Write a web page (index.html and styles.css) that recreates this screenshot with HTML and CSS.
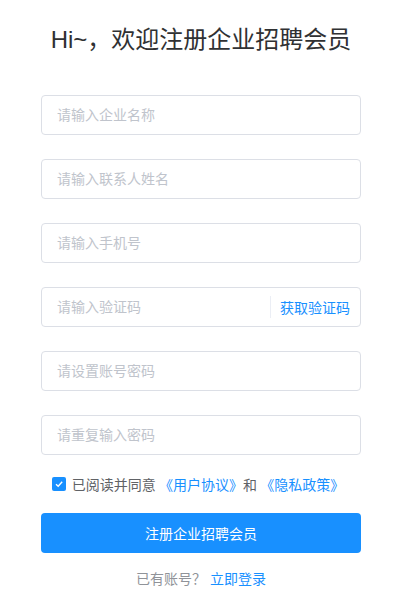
FILE: index.html
```html
<!DOCTYPE html>
<html lang="zh-CN">
<head>
  <meta charset="UTF-8">
  <meta name="viewport" content="width=device-width, initial-scale=1.0">
  <title>注册企业招聘会员</title>
  <link rel="stylesheet" href="styles.css">
</head>
<body>
  <div class="container">
    <h1 class="title">Hi~，欢迎注册企业招聘会员</h1>
    <form class="form">
      <div class="field"><input type="text" placeholder="请输入企业名称"></div>
      <div class="field"><input type="text" placeholder="请输入联系人姓名"></div>
      <div class="field"><input type="text" placeholder="请输入手机号"></div>
      <div class="field code">
        <input type="text" placeholder="请输入验证码">
        <span class="divider"></span>
        <a class="get-code" href="#">获取验证码</a>
      </div>
      <div class="field"><input type="password" placeholder="请设置账号密码"></div>
      <div class="field last"><input type="password" placeholder="请重复输入密码"></div>

      <label class="agree">
        <span class="check">
          <svg width="10" height="10" viewBox="0 0 10 10"><path d="M2 5.2 L4.2 7.3 L8.2 2.8" fill="none" stroke="#fff" stroke-width="1.4"/></svg>
        </span>
        <span class="agree-text">已阅读并同意 <a href="#">《用户协议》</a>和 <a href="#">《隐私政策》</a></span>
      </label>

      <button type="button" class="submit">注册企业招聘会员</button>
      <div class="login">已有账号？ <a href="#">立即登录</a></div>
    </form>
  </div>
</body>
</html>
```

FILE: styles.css
```css
body {
  margin: 0;
  padding: 0;
  background-color: #fff;
  font-family: "Liberation Sans", "Noto Sans CJK SC", sans-serif;
}

.container {
  width: 320px;
  margin: 0 auto;
}

.title {
  margin: 22px 0 37px;
  font-size: 24px;
  font-weight: normal;
  line-height: 36px;
  text-align: center;
  color: #303133;
}

.field {
  display: flex;
  align-items: center;
  height: 40px;
  margin-bottom: 24px;
  border: 1px solid #dcdfe6;
  border-radius: 4px;
  box-sizing: border-box;
}

.field.last {
  margin-bottom: 19px;
}

.field input {
  flex: 1;
  min-width: 0;
  height: 100%;
  padding: 0 15px;
  border: none;
  outline: none;
  background: transparent;
  font-family: inherit;
  font-size: 14px;
  color: #606266;
}

.field input::placeholder {
  color: #c0c4cc;
}

.divider {
  width: 1px;
  height: 22px;
  background-color: #ebeef5;
}

.get-code {
  padding: 0 10px 0 9px;
  font-size: 14px;
  color: #1890ff;
  text-decoration: none;
}

.agree {
  display: flex;
  justify-content: center;
  align-items: center;
  gap: 6px;
  height: 20px;
  margin: 0 0 19px -6px;
  font-family: "Noto Sans CJK SC", sans-serif;
  font-size: 14px;
  color: #606266;
}

.agree-text {
  display: block;
  line-height: 20px;
  white-space: nowrap;
}

.agree a {
  color: #1890ff;
  text-decoration: none;
}

.check {
  display: flex;
  align-items: center;
  justify-content: center;
  width: 14px;
  height: 14px;
  border-radius: 2px;
  background-color: #1890ff;
}

.submit {
  display: block;
  width: 100%;
  height: 40px;
  border: none;
  border-radius: 4px;
  background-color: #1890ff;
  color: #fff;
  font-family: inherit;
  font-size: 14px;
  cursor: pointer;
}

.login {
  margin-top: 16px;
  font-size: 14px;
  line-height: 20px;
  text-align: center;
  color: #909399;
}

.login a {
  color: #1890ff;
  text-decoration: none;
}
```
